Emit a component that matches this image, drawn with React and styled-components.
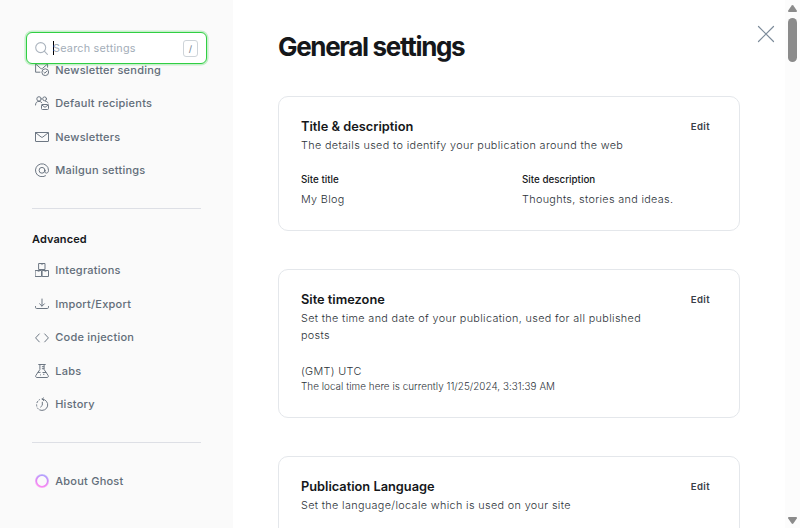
import React from "react";
import styled, { createGlobalStyle } from "styled-components";

const GlobalStyle = createGlobalStyle`
  * { box-sizing: border-box; }
  html, body { margin: 0; height: 100%; overflow: hidden; background: #fff; }
  body { font-family: Inter, "Liberation Sans", sans-serif; color: #15171a; font-size: 11.2px; }
  h1, h2, p, ul { margin: 0; padding: 0; }
  button { font: inherit; background: none; border: 0; padding: 0; }
`;

const Page = styled.div`
  display: flex;
  height: 528px;
  overflow: hidden;
`;

const Sidebar = styled.aside`
  width: 233px;
  flex: none;
  background: #fafafa;
  padding: 32px 26px 0;
`;

const SearchBox = styled.label`
  position: relative;
  z-index: 1;
  display: flex;
  align-items: center;
  width: 181px;
  height: 32px;
  padding: 0 9px 0 8px;
  background: #fff;
  border: 1px solid #30cf43;
  border-radius: 6px;
  box-shadow: 0 0 0 1.6px rgba(48, 207, 67, 0.25);
`;

const Caret = styled.span`
  width: 1px;
  height: 14px;
  margin: 0 -1px 0 5px;
  background: #000;
`;

const Placeholder = styled.span`
  flex: 1;
  padding-top: 2px;
  color: #a3adb8;
  font-size: 10.8px;
  letter-spacing: 0.25px;
  line-height: 16px;
`;

const KeyHint = styled.kbd`
  display: flex;
  align-items: center;
  justify-content: center;
  width: 15px;
  height: 17px;
  margin-right: -1px;
  border: 1px solid #ced4d9;
  border-radius: 3px;
  color: #7c8b9a;
  font: 500 9px Inter, sans-serif;
`;

const NavList = styled.ul`
  list-style: none;
  margin: ${(p) => p.$top}px 0 0 9px;
`;

const NavItem = styled.li`
  display: flex;
  align-items: center;
  gap: 6.2px;
  height: 33.5px;
  color: #626d79;
  font-size: 11px;
  font-weight: 480;
  letter-spacing: 0.24px;
  line-height: 16px;
  white-space: nowrap;

  svg { flex: none; }
`;

const Divider = styled.div`
  width: 169px;
  height: 1px;
  margin: ${(p) => p.$top}px 0 0 6px;
  background: #dddfe5;
`;

const GroupTitle = styled.h2`
  margin: 22px 0 0 6px;
  font-size: 11px;
  font-weight: 600;
  line-height: 16px;
  letter-spacing: 0.1px;
`;

const Main = styled.main`
  flex: 1;
  min-width: 0;
  display: flex;
  justify-content: space-between;
  padding: 0 10px 0 45px;
`;

const Content = styled.div`
  width: 462px;
`;

const PageTitle = styled.h1`
  height: 96px;
  padding-top: 30px;
  font-size: 26px;
  font-weight: 700;
  line-height: 34px;
  letter-spacing: -1.33px;
  white-space: nowrap;
`;

const Card = styled.section`
  height: ${(p) => p.$height}px;
  margin-bottom: 38px;
  padding: 21px 22px;
  border: 1px solid #e4e7eb;
  border-radius: 10px;
`;

const CardHeader = styled.header`
  display: flex;
  justify-content: space-between;
  align-items: flex-start;
  padding-right: 7px;
`;

const CardTitle = styled.h2`
  font-size: 12.8px;
  font-weight: 600;
  line-height: 18px;
`;

const CardText = styled.p`
  max-width: 352px;
  color: #2c3238;
  font-size: 10.8px;
  font-weight: 360;
  line-height: 17px;
  letter-spacing: 0.36px;
  padding-top: 1px;
`;

const EditButton = styled.button`
  margin-top: 1px;
  color: #394047;
  font-size: 9.6px;
  font-weight: 600;
  line-height: 16px;
  letter-spacing: 0.4px;
`;

const Fields = styled.div`
  display: grid;
  grid-template-columns: 1fr 1fr;
  column-gap: 26px;
  margin-top: 18px;
`;

const FieldLabel = styled.div`
  font-size: 9.8px;
  font-weight: 550;
  line-height: 16px;
  margin-bottom: 3px;
`;

const FieldValue = styled.div`
  color: #2c3238;
  font-size: 10.8px;
  font-weight: 360;
  line-height: 18px;
  letter-spacing: 0.34px;
`;

const TimeZone = styled.div`
  margin-top: 19px;
`;

const Hint = styled.div`
  margin-top: -1px;
  color: #2c3238;
  font-size: 9.85px;
  font-weight: 360;
  line-height: 13px;
  letter-spacing: 0.05px;
`;

const CloseButton = styled.button`
  width: 18px;
  height: 18px;
  margin-top: 25px;

  svg { display: block; }
`;

const ScrollTrack = styled.div`
  display: flex;
  flex-direction: column;
  align-items: center;
  width: 15px;
  flex: none;
  padding: 5px 0 4px;
  background: #fcfcfc;

  svg { display: block; flex: none; }
`;

const ScrollThumb = styled.div`
  width: 9px;
  height: 44px;
  margin: 6px 0 auto;
  border-radius: 5px;
  background: #8b8b8b;
`;

const Icon = ({ size = 14, children }) => (
  <svg width={size} height={size} viewBox="0 0 14 14" fill="none" stroke="#6d7783" strokeWidth="1" strokeLinecap="round" strokeLinejoin="round">
    {children}
  </svg>
);

const SearchIcon = () => (
  <svg width="13" height="13" viewBox="0 0 13 13" fill="none" stroke="#abb4be" strokeWidth="1.1" strokeLinecap="round">
    <circle cx="5.7" cy="5.6" r="5" />
    <path d="M9.3 9.2 12.4 12.3" />
  </svg>
);

const SendingIcon = () => (
  <Icon>
    <path d="M5 9.200H.6V.8h12v3.400M.7 1l5 4.400q.9.700 1.800 0L12.500 1" />
    <circle cx="10.300" cy="9.200" r="3.400" />
    <path d="m8.900 9.200 1 1 1.800-2" />
  </Icon>
);

const RecipientsIcon = () => (
  <Icon>
    <circle cx="4" cy="2.900" r="2.200" />
    <path d="M.5 9c0-2.300 1.300-3.600 3.500-3.600 1.300 0 2.200.5 2.800 1.200M10.500 5.200c1.300.2 2.100.8 2.500 1.700" />
    <circle cx="9.600" cy="2.800" r="1.900" />
    <rect x="6.500" y="8.500" width="7" height="5" rx="1" />
    <path d="m6.800 9 3.200 2.300L13.200 9" />
  </Icon>
);

const MailIcon = () => (
  <Icon>
    <rect x=".5" y="2.500" width="13" height="9" rx=".3" />
    <path d="m.8 2.800 5.300 4.200q.9.700 1.800 0l5.300-4.200" />
  </Icon>
);

const AtIcon = () => (
  <Icon>
    <circle cx="7" cy="7.300" r="2.900" />
    <path d="M9.900 7.300v1.100c0 2.600 3.600 2.300 3.600-1.100A6.500 6.500 0 1 0 10.500 12.800" />
  </Icon>
);

const BlocksIcon = () => (
  <Icon>
    <rect x="4" y=".5" width="6" height="6" />
    <rect x=".5" y="7.500" width="6" height="6" />
    <rect x="7.500" y="7.500" width="6" height="6" />
    <path d="M6.300.8v.8h1.400V.8M2.900 7.700v.8h1.400v-.8M9.700 7.700v.8h1.400v-.8" strokeWidth=".5" />
  </Icon>
);

const ImportIcon = () => (
  <Icon>
    <path d="M7 2v7M4.600 6.800 7 9.200l2.400-2.400M.5 9.500v.8q0 1.200 1.200 1.200h10.600q1.200 0 1.200-1.200v-.8" />
  </Icon>
);

const CodeIcon = () => (
  <Icon>
    <path d="M4.300 3.900.6 7.900l3.700 4M9.700 3.900 13.400 7.900l-3.700 4" />
  </Icon>
);

const FlaskIcon = () => (
  <Icon>
    <path d="M3.700.5h6.600M4.900.8v4.700l-4 5.900c-.7 1.100-.1 2.100 1.100 2.100h10c1.200 0 1.800-1 1.100-2.100l-4-5.900V.8M3 8.400h2.100M7.900 8.500h3.100M7.300 2.700h1.500M7.300 4.700h1.500M5.500 10.900h.1M8.500 10.300h.5" />
  </Icon>
);

const HistoryIcon = () => (
  <Icon>
    <path d="M7.200 2.100a5.700 5.700 0 1 1-2.500 10.900M7.200 2.100 8.600.9M7.200 2.100 8.800 3.700M7.300 5.200v3.100L5.600 10" />
    <path d="M3.300 12A6 6 0 0 1 4.600 2.600" strokeDasharray="1.300 2" />
  </Icon>
);

const GhostRing = () => (
  <svg width="14" height="14" viewBox="0 0 14 14" fill="none">
    <defs>
      <linearGradient id="ring" x1="9" y1="0" x2="5" y2="14" gradientUnits="userSpaceOnUse">
        <stop stopColor="#a6a3ff" />
        <stop offset=".55" stopColor="#e486f5" />
        <stop offset="1" stopColor="#ff8df2" />
      </linearGradient>
    </defs>
    <circle cx="7" cy="7" r="6.100" stroke="url(#ring)" strokeWidth="1.800" opacity=".65" />
    <circle cx="7" cy="7" r="5.600" stroke="url(#ring)" strokeWidth="1.400" />
  </svg>
);

const emailItems = [
  ["Newsletter sending", SendingIcon],
  ["Default recipients", RecipientsIcon],
  ["Newsletters", MailIcon],
  ["Mailgun settings", AtIcon],
];

const advancedItems = [
  ["Integrations", BlocksIcon],
  ["Import/Export", ImportIcon],
  ["Code injection", CodeIcon],
  ["Labs", FlaskIcon],
  ["History", HistoryIcon],
];

const Nav = ({ items, top }) => (
  <NavList $top={top}>
    {items.map(([label, Glyph]) => (
      <NavItem key={label}>
        <Glyph />
        {label}
      </NavItem>
    ))}
  </NavList>
);

const SettingCard = ({ title, text, height, children }) => (
  <Card $height={height}>
    <CardHeader>
      <div>
        <CardTitle>{title}</CardTitle>
        <CardText>{text}</CardText>
      </div>
      <EditButton>Edit</EditButton>
    </CardHeader>
    {children}
  </Card>
);

export default function App() {
  return (
    <Page>
      <GlobalStyle />
      <Sidebar>
        <SearchBox>
          <SearchIcon />
          <Caret />
          <Placeholder>Search settings</Placeholder>
          <KeyHint>/</KeyHint>
        </SearchBox>
        <Nav items={emailItems} top={-10.8} />
        <Divider $top={20.8} />
        <GroupTitle>Advanced</GroupTitle>
        <Nav items={advancedItems} top={6.7} />
        <Divider $top={20.8} />
        <Nav items={[["About Ghost", GhostRing]]} top={21} />
      </Sidebar>
      <Main>
        <Content>
          <PageTitle>General settings</PageTitle>
          <SettingCard
            title="Title & description"
            text="The details used to identify your publication around the web"
            height={135}
          >
            <Fields>
              <div>
                <FieldLabel>Site title</FieldLabel>
                <FieldValue>My Blog</FieldValue>
              </div>
              <div>
                <FieldLabel>Site description</FieldLabel>
                <FieldValue>Thoughts, stories and ideas.</FieldValue>
              </div>
            </Fields>
          </SettingCard>
          <SettingCard
            title="Site timezone"
            text="Set the time and date of your publication, used for all published posts"
            height={149}
          >
            <TimeZone>
              <FieldValue>(GMT) UTC</FieldValue>
              <Hint>The local time here is currently 11/25/2024, 3:31:39 AM</Hint>
            </TimeZone>
          </SettingCard>
          <SettingCard
            title="Publication Language"
            text="Set the language/locale which is used on your site"
            height={135}
          />
        </Content>
        <CloseButton aria-label="Close">
          <svg width="18" height="18" viewBox="0 0 18 18" stroke="#7c8b9a" strokeWidth="1.200" strokeLinecap="round">
            <path d="m1.500 1.500 15 15M16.500 1.500l-15 15" />
          </svg>
        </CloseButton>
      </Main>
      <ScrollTrack>
        <svg width="9" height="7" viewBox="0 0 9 7" fill="#8b8b8b">
          <path d="M3.700.5q.8-.9 1.600 0L8.800 5.500q.5 1.500-.6 1.500H.8Q-.3 7 .2 5.500Z" />
        </svg>
        <ScrollThumb />
        <svg width="9" height="7" viewBox="0 0 9 7" fill="#8b8b8b">
          <path d="M3.700 6.500q.8.900 1.600 0L8.800 1.500Q9.300 0 8.200 0H.8Q-.3 0 .2 1.500Z" />
        </svg>
      </ScrollTrack>
    </Page>
  );
}
